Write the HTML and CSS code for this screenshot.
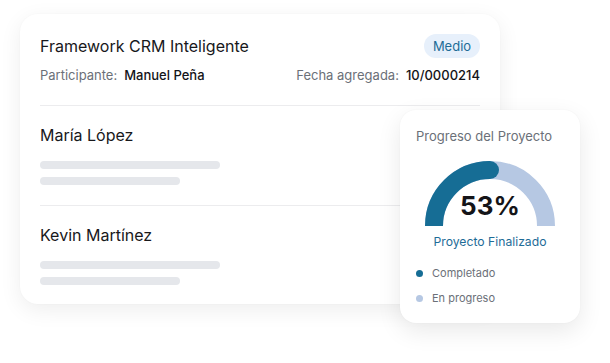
FILE: index.html
```html
<!DOCTYPE html>
<html lang="es">
<head>
<meta charset="utf-8">
<title>Framework CRM</title>
<link rel="stylesheet" href="styles.css">
</head>
<body>
<div class="stage">
  <div class="card">
    <div class="header">
      <div class="title-row">
        <h1 class="title">Framework CRM Inteligente</h1>
        <span class="badge">Medio</span>
      </div>
      <div class="meta-row">
        <div class="meta"><span class="meta-label">Participante:</span><span class="meta-value">Manuel Peña</span></div>
        <div class="meta"><span class="meta-label">Fecha agregada:</span><span class="meta-value">10/0000214</span></div>
      </div>
    </div>
    <div class="row">
      <div class="name">María López</div>
      <div class="bar bar-long"></div>
      <div class="bar bar-short"></div>
    </div>
    <div class="row">
      <div class="name">Kevin Martínez</div>
      <div class="bar bar-long"></div>
      <div class="bar bar-short"></div>
    </div>
  </div>

  <div class="progress-card">
    <div class="progress-title">Progreso del Proyecto</div>
    <div class="gauge">
      <svg class="gauge-svg" width="130" height="65" viewBox="0 0 130 65">
        <path d="M 9 65 A 56 56 0 0 1 121 65" fill="none" stroke="#b6c8e3" stroke-width="18"/>
        <path d="M 9 65 A 56 56 0 0 1 65 9" fill="none" stroke="#166d95" stroke-width="18"/>
        <circle cx="65" cy="9" r="9" fill="#166d95"/>
      </svg>
      <div class="gauge-value">53%</div>
    </div>
    <div class="gauge-label">Proyecto Finalizado</div>
    <ul class="legend">
      <li class="legend-item"><span class="dot dot-done"></span>Completado</li>
      <li class="legend-item"><span class="dot dot-progress"></span>En progreso</li>
    </ul>
  </div>
</div>
</body>
</html>
```

FILE: styles.css
```css
* { box-sizing: border-box; }

html, body {
  margin: 0;
  padding: 0;
  background: #ffffff;
}

body {
  width: 610px;
  height: 363px;
  overflow: hidden;
  font-family: "Inter", "Noto Sans", "Liberation Sans", sans-serif;
  color: #1b1b1f;
}

.stage {
  position: relative;
  width: 610px;
  height: 363px;
  padding: 14px 0 0 20px;
}

.card {
  width: 480px;
  background: #ffffff;
  border-radius: 18px;
  padding: 20px 20px 0;
  box-shadow: 0 6px 22px rgba(0, 0, 0, 0.07), 0 0 2px rgba(0, 0, 0, 0.03);
}

.header {
  padding-bottom: 20px;
}

.title-row {
  display: flex;
  justify-content: space-between;
  align-items: center;
  height: 24px;
}

.title {
  margin: 0;
  font-size: 16px;
  font-weight: 400;
  line-height: 20px;
  color: #18181b;
}

.badge {
  display: inline-flex;
  align-items: center;
  justify-content: center;
  width: 56px;
  height: 24px;
  border-radius: 12px;
  background: #e7f0fb;
  color: #1e6c97;
  font-size: 13px;
  font-weight: 400;
}

.meta-row {
  display: flex;
  justify-content: space-between;
  margin-top: 8px;
  line-height: 19px;
  font-size: 13px;
}

.meta {
  display: flex;
  gap: 7px;
}

.meta-label {
  color: #6b7078;
}

.meta-value {
  color: #141418;
  font-weight: 500;
}

.row {
  border-top: 1px solid #ececee;
  padding: 19px 0 20px;
}

.row:last-child {
  padding-bottom: 19px;
}

.name {
  font-size: 16px;
  line-height: 20px;
  color: #18181b;
}

.bar {
  height: 8px;
  border-radius: 4px;
  background: #e5e7eb;
}

.bar-long {
  width: 180px;
  margin-top: 16px;
}

.bar-short {
  width: 140px;
  margin-top: 8px;
}

.progress-card {
  position: absolute;
  left: 400px;
  top: 110px;
  width: 180px;
  height: 213px;
  background: #ffffff;
  border-radius: 16px;
  padding: 17px 16px;
  box-shadow: 0 8px 24px rgba(0, 0, 0, 0.09), 0 0 2px rgba(0, 0, 0, 0.04);
}

.progress-title {
  font-size: 13px;
  line-height: 18px;
  color: #6b7078;
}

.gauge {
  position: relative;
  display: flex;
  justify-content: center;
  margin-top: 16px;
  height: 65px;
}

.gauge-svg {
  display: block;
}

.gauge-value {
  position: absolute;
  left: 0;
  right: 0;
  top: 29px;
  text-align: center;
  font-size: 26px;
  font-weight: 700;
  line-height: 32px;
  color: #141418;
}

.gauge-label {
  margin-top: 7px;
  text-align: center;
  font-size: 12.2px;
  line-height: 18px;
  color: #1e6c97;
}

.legend {
  list-style: none;
  margin: 14px 0 0;
  padding: 0;
  display: flex;
  flex-direction: column;
  gap: 9px;
}

.legend-item {
  display: flex;
  align-items: center;
  gap: 9px;
  font-size: 11px;
  line-height: 16px;
  color: #6b7078;
}

.dot {
  width: 7px;
  height: 7px;
  border-radius: 50%;
}

.dot-done { background: #166d95; }
.dot-progress { background: #b6c8e3; }
```
